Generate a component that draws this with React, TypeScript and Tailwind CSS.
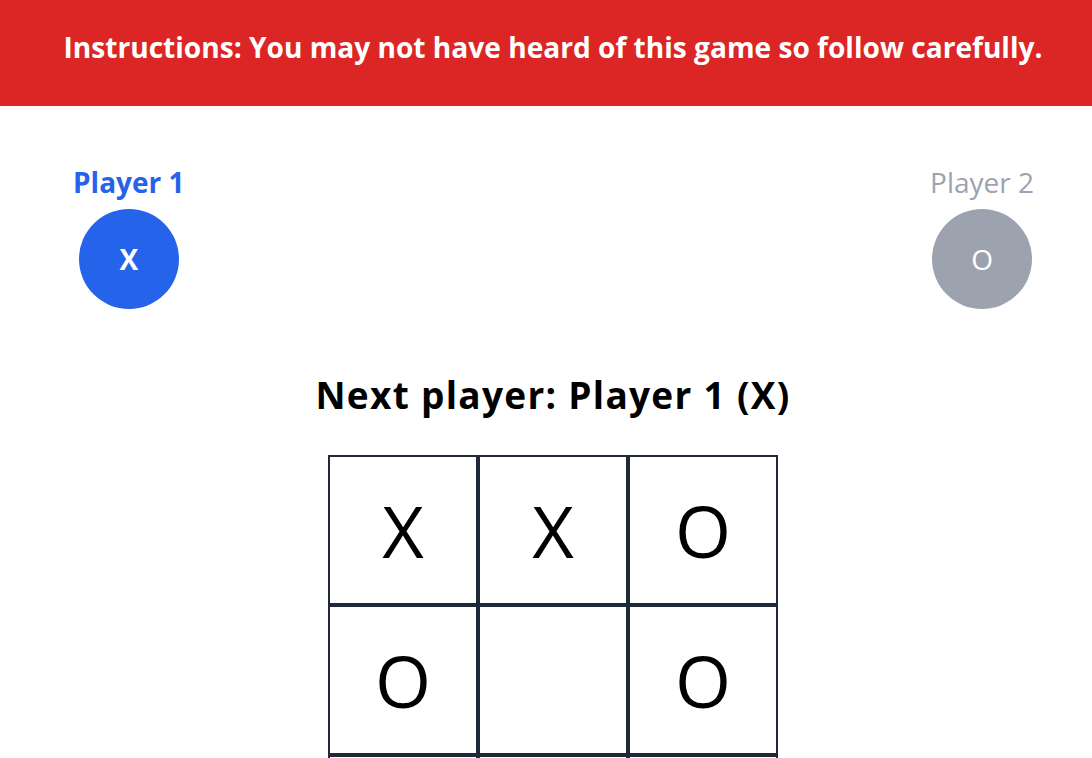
import React from "react";

const board = ["X", "X", "O", "O", "", "O", "", "", ""];

export default function App() {
  return (
    <div className="min-h-screen bg-white" style={{ fontFamily: '"Open Sans", "Noto Sans", sans-serif' }}>
      <div className="h-[106px] bg-[#dc2626] flex items-center justify-center pl-[14px] pb-[12px]">
        <h1 className="text-white font-bold text-[28.1px] leading-[40px]">
          Instructions: You may not have heard of this game so follow carefully.
        </h1>
      </div>
      <div className="flex justify-between pl-[73px] pr-[58px] pt-[57px]">
        <div className="flex flex-col items-center">
          <div className="text-[#2563eb] font-bold text-[28px] leading-[38px]">Player 1</div>
          <div className="mt-[8px] w-[100px] h-[100px] rounded-full bg-[#2563eb] flex items-center justify-center text-white font-bold text-[28px]">
            X
          </div>
        </div>
        <div className="flex flex-col items-center">
          <div className="text-[#9ca3af] text-[28px] leading-[38px]">Player 2</div>
          <div className="mt-[8px] w-[100px] h-[100px] rounded-full bg-[#9ca3af] flex items-center justify-center text-white text-[28px]">
            O
          </div>
        </div>
      </div>
      <div className="flex justify-center pl-[14px] mt-[62px]">
        <h2 className="text-black font-bold text-[37px] leading-[48px] tracking-[1.3px]">Next player: Player 1 (X)</h2>
      </div>
      <div className="flex justify-center pl-[14px] mt-[36px]">
        <div className="grid grid-cols-3 w-[450px]">
          {board.map((v, i) => (
            <div
              key={i}
              className="w-[150px] h-[150px] border-2 border-[#1f2937] flex items-center justify-center text-black text-[72px]"
            >
              {v}
            </div>
          ))}
        </div>
      </div>
    </div>
  );
}
